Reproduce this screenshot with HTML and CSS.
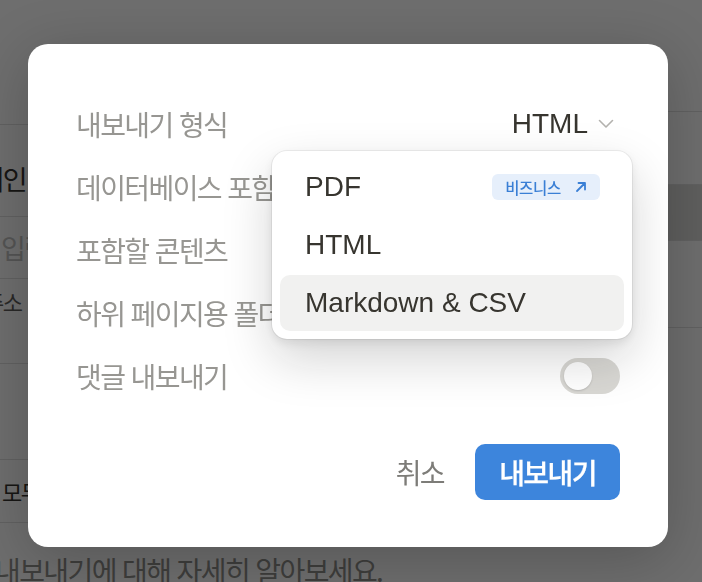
FILE: index.html
```html
<!DOCTYPE html>
<html lang="ko">
<head>
    <meta charset="UTF-8">
    <title>내보내기</title>
    <link rel="stylesheet" href="styles.css">
</head>
<body>

<!-- settings page behind the dialog -->
<div class="page">
    <div class="page-left">
        <div class="page-row page-row-top"></div>
        <div class="page-row page-row-domain"><span class="page-text page-text-domain">도메인</span></div>
        <div class="page-row page-row-input"><span class="page-text page-text-muted">입력</span></div>
        <div class="page-row page-row-address"><span class="page-text page-text-address">주소</span></div>
        <div class="page-row page-row-empty"></div>
        <div class="page-row page-row-all"><span class="page-text page-text-all">모두</span></div>
        <div class="page-footer">내보내기에 대해 자세히 알아보세요.</div>
    </div>
    <div class="page-right">
        <div class="side-row side-row-1"></div>
        <div class="side-row side-row-2"></div>
        <div class="side-row side-row-3"></div>
        <div class="side-row side-row-4"></div>
    </div>
</div>

<div class="overlay"></div>

<div class="modal">
    <div class="export-row">
        <span class="export-label">내보내기 형식</span>
        <div class="format-select">
            <span class="format-value">HTML</span>
            <svg class="chevron" width="16" height="10" viewBox="0 0 16 10">
                <path d="M1.5 1.5 L8 8 L14.5 1.5" fill="none" stroke="#b3b2ae" stroke-width="1.6"
                      stroke-linecap="round" stroke-linejoin="round"/>
            </svg>
        </div>
    </div>
    <div class="export-row">
        <span class="export-label">데이터베이스 포함</span>
        <div class="toggle"><div class="toggle-knob"></div></div>
    </div>
    <div class="export-row">
        <span class="export-label">포함할 콘텐츠</span>
        <div class="format-select"><span class="format-value">모두</span></div>
    </div>
    <div class="export-row">
        <span class="export-label">하위 페이지용 폴더 만들기</span>
        <div class="toggle"><div class="toggle-knob"></div></div>
    </div>
    <div class="export-row">
        <span class="export-label">댓글 내보내기</span>
        <div class="toggle"><div class="toggle-knob"></div></div>
    </div>

    <div class="export-footer">
        <button class="btn btn-cancel">취소</button>
        <button class="btn btn-export">내보내기</button>
    </div>

    <!-- open format menu -->
    <div class="format-menu">
        <div class="format-item">
            <span>PDF</span>
            <span class="plan-badge">비즈니스
                <svg class="plan-arrow" width="12" height="12" viewBox="0 0 12 12">
                    <path d="M2 10 L10 2 M3.5 2 H10 V8.5" fill="none" stroke="#3a7fd5" stroke-width="1.8"
                          stroke-linecap="round" stroke-linejoin="round"/>
                </svg>
            </span>
        </div>
        <div class="format-item">HTML</div>
        <div class="format-item format-item-active">Markdown &amp; CSV</div>
    </div>
</div>

</body>
</html>
```

FILE: styles.css
```css
html, body {
    margin: 0;
    padding: 0;
    width: 702px;
    height: 582px;
    overflow: hidden;
    background: white;
    color: #37352f;
    font-family: "Liberation Sans", "Noto Sans CJK KR", sans-serif;
}

/* page behind the overlay */
.page {
    display: flex;
    justify-content: space-between;
    height: 100%;
}

.page-left {
    width: 320px;
}

.page-row {
    box-sizing: border-box;
    border-bottom: 1px solid #e2e2e0;
    display: flex;
    align-items: center;
    white-space: nowrap;
    font-family: "Noto Sans CJK KR", sans-serif;
    font-size: 27px;
    letter-spacing: -1.5px;
}

.page-row-top { height: 125px; }
.page-row-domain { height: 92px; padding-top: 16px; }
.page-row-input { height: 62px; }
.page-row-address { height: 85px; align-items: flex-start; padding-top: 7px; }
.page-row-empty { height: 96px; }
.page-row-all { height: 63px; }

.page-text {
    line-height: 30px;
}

.page-text-domain {
    margin-left: -44px;
    color: #37352f;
}

.page-text-muted {
    margin-left: 1px;
    color: #c4c4c2;
}

.page-text-address {
    margin-left: -16px;
    font-size: 22px;
    color: #5f5e5b;
}

.page-text-all {
    margin-left: 2px;
    font-size: 22px;
    color: #37352f;
}

.page-footer {
    padding-top: 32px;
    margin-left: -5px;
    line-height: 30px;
    white-space: nowrap;
    font-family: "Noto Sans CJK KR", sans-serif;
    font-size: 28px;
    letter-spacing: -1.6px;
    color: #91908c;
}

.page-right {
    width: 34px;
}

.side-row {
    box-sizing: border-box;
    border-bottom: 1px solid #e2e2e0;
}

.side-row-1 { height: 112px; }
.side-row-2 { height: 73px; }
.side-row-3 { height: 56px; background: #dcdcda; }
.side-row-4 { height: 87px; }

.overlay {
    position: fixed;
    left: 0;
    top: 0;
    right: 0;
    bottom: 0;
    background: rgba(0, 0, 0, 0.57);
}

/* export dialog */
.modal {
    position: absolute;
    left: 28px;
    top: 44px;
    width: 640px;
    height: 503px;
    box-sizing: border-box;
    padding: 48px 48px 47px;
    background: white;
    border-radius: 20px;
    box-shadow: 0 12px 60px rgba(0, 0, 0, 0.22);
}

.export-row {
    height: 63px;
    display: flex;
    align-items: center;
    justify-content: space-between;
}

.export-label {
    font-family: "Noto Sans CJK KR", sans-serif;
    font-size: 28px;
    letter-spacing: -1.6px;
    color: #979692;
    white-space: nowrap;
}

.format-select {
    display: flex;
    align-items: center;
}

.format-value {
    font-size: 28px;
    color: #37352f;
}

.chevron {
    margin-left: 10px;
    margin-right: 6px;
}

.toggle {
    width: 60px;
    height: 36px;
    box-sizing: border-box;
    padding: 4px;
    border-radius: 18px;
    background: #d9d8d4;
}

.toggle-knob {
    width: 28px;
    height: 28px;
    border-radius: 50%;
    background: white;
    box-shadow: 0 1px 2px rgba(0, 0, 0, 0.15);
}

.export-footer {
    margin-top: 37px;
    display: flex;
    justify-content: flex-end;
    align-items: center;
}

.btn {
    border: 0;
    padding: 0;
    font-family: "Noto Sans CJK KR", sans-serif;
    font-size: 28px;
    letter-spacing: -1.6px;
    cursor: pointer;
}

.btn-cancel {
    background: none;
    color: #7d7c78;
    margin-right: 31px;
}

.btn-export {
    width: 145px;
    height: 56px;
    border-radius: 10px;
    background: #3d85dc;
    color: white;
    font-weight: 500;
    -webkit-text-stroke: 0.25px white;
}

/* format dropdown */
.format-menu {
    position: absolute;
    left: 244px;
    top: 107px;
    width: 360px;
    box-sizing: border-box;
    padding: 8px;
    display: flex;
    flex-direction: column;
    gap: 2px;
    background: white;
    border-radius: 15px;
    box-shadow: 0 0 0 1px rgba(15, 15, 15, 0.06),
                0 4px 10px rgba(15, 15, 15, 0.08),
                0 20px 50px rgba(15, 15, 15, 0.18);
}

.format-item {
    height: 56px;
    padding: 0 24px 0 25px;
    display: flex;
    align-items: center;
    justify-content: space-between;
    border-radius: 10px;
    font-size: 28px;
    color: #37352f;
}

.format-item-active {
    background: #f1f1f0;
}

.plan-badge {
    height: 26px;
    padding: 0 13px 0 13px;
    display: flex;
    align-items: center;
    border-radius: 6px;
    background: #e6effb;
    color: #3a7fd5;
    font-family: "Noto Sans CJK KR", sans-serif;
    font-size: 15.5px;
    font-weight: 500;
    letter-spacing: -0.3px;
}

.plan-arrow {
    margin-left: 14px;
}
```
